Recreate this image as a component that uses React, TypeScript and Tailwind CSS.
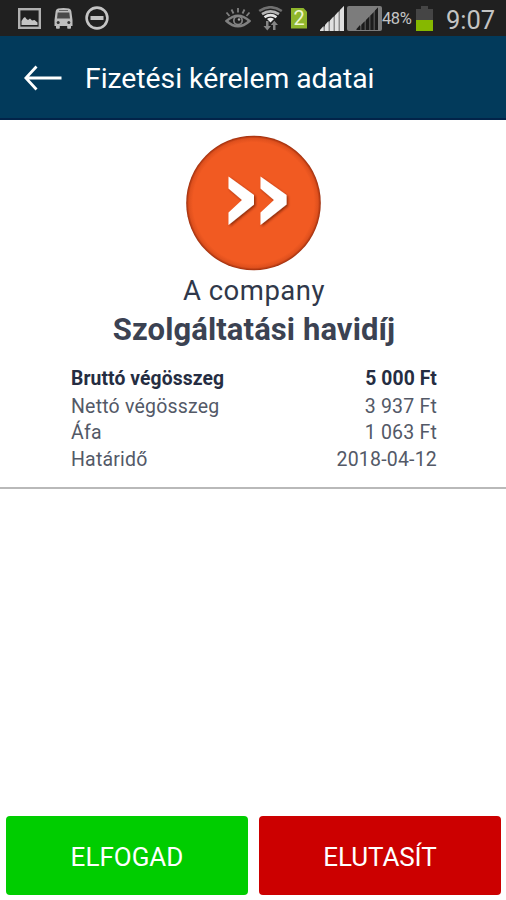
import React from 'react';

interface DetailRow {
  label: string;
  value: string;
  isTotal?: boolean;
}

const details: DetailRow[] = [
  { label: 'Bruttó végösszeg', value: '5 000 Ft', isTotal: true },
  { label: 'Nettó végösszeg', value: '3 937 Ft' },
  { label: 'Áfa', value: '1 063 Ft' },
  { label: 'Határidő', value: '2018-04-12' },
];

const StatusBar: React.FC = () => (
  <div className="flex h-9 items-center bg-[#202020] pl-[18px] pr-[11px] text-[#c4c4c4]">
    {/* notifications */}
    <svg className="h-[21px] w-[23px]" viewBox="0 0 23 21" fill="none">
      <rect x="1.2" y="1.2" width="20.6" height="18.6" stroke="#b0b0b0" strokeWidth="2.4" />
      <path d="M3.5 17v-4l2-3 1.5-1 1.5 2 1.5 1 2-1.5 2 2 2.5-.5 3 2.5V17Z" fill="#c4c4c4" />
    </svg>
    <svg className="ml-[13px] h-[21px] w-[19px]" viewBox="0 0 19 21" fill="#bdbdbd">
      <path d="M4 .5Q9.5-.5 15 .5q2 .5 2.3 2.5l1.2 9v6h-1.5v2q0 .8-.8.8h-2.2q-.8 0-.8-.8v-2H5.8v2q0 .8-.8.8H2.8q-.8 0-.8-.8v-2H.5v-6l1.200-9Q2 1 4 .5Z" />
      <rect x="5" y="2" width="9" height="1" fill="#666" />
      <path d="M3.7 4.500h11.6l.7 6H3Z" fill="#4a4a4a" />
      <circle cx="4.2" cy="14.5" r="1.5" fill="#333" />
      <circle cx="14.8" cy="14.5" r="1.5" fill="#333" />
    </svg>
    <svg className="ml-3 h-6 w-6" viewBox="0 0 24 24" fill="none" stroke="#c4c4c4">
      <circle cx="12" cy="12" r="10.4" strokeWidth="2.6" />
      <path d="M5.5 12h13" strokeWidth="4" />
    </svg>

    {/* system indicators */}
    <svg className="ml-auto h-[22px] w-[26px]" viewBox="0 0 26 22" fill="none" stroke="#808080">
      <path d="M1.5 14Q13 3.500 24.5 14Q13 24.500 1.5 14Z" strokeWidth="2.4" />
      <circle cx="13" cy="13.5" r="5" fill="#858585" stroke="none" />
      <circle cx="13" cy="13.5" r="3.3" fill="#202020" stroke="none" />
      <circle cx="14" cy="12.5" r="1.2" fill="#aaa" stroke="none" />
      <path d="M13 1v4.500M6.5 2.500l2 4M19.5 2.500l-2 4M1.5 5.500l3 3.500M24.5 5.500l-3 3.500" strokeWidth="1.8" />
    </svg>
    <svg className="ml-[7px] h-[25px] w-[25px]" viewBox="0 0 25 25" fill="none">
      <path d="M1.2 5Q12.5-2.500 23.8 5" stroke="#707070" strokeWidth="2.6" />
      <path d="M4 8.200Q12.5 2.500 21 8.200" stroke="#b5b5b5" strokeWidth="2.6" />
      <path d="M6.5 11.200Q12.5 7 18.5 11.200" stroke="#e4e4e4" strokeWidth="2.6" />
      <path d="M9 13Q12.5 10.700 16 13L12.5 16.500Z" fill="#eee" />
      <path d="M8 15h2.500v5H13l-3.700 4.500L5.500 20H8ZM15 24v-5h-2.200l3.500-4.200L20 19h-2.500v5Z" fill="#858585" />
    </svg>
    <div className="ml-[8px] flex h-[21px] w-4 items-center justify-center bg-[#8fb62c] text-[20px] leading-none text-[#edf6cf] [clip-path:polygon(0_0,75%_0,100%_20%,100%_100%,0_100%)]">
      2
    </div>
    <svg className="ml-[13px] h-[25px] w-6" viewBox="0 0 24 25">
      <path d="M0 25 24 0v25Z" fill="#8a8a8a" />
      <path d="M0 25v-1l3.500-4v5ZM5 25v-6l3.500-4v10ZM10 25V14.500l3.500-4V25ZM15 25V9.500l3.500-4V25ZM20 25V4l4-4v25Z" fill="#e0e0e0" />
    </svg>
    <svg className="ml-[3px] h-[25px] w-[35px]" viewBox="0 0 35 25">
      <rect width="35" height="25" rx="2" fill="#7c7c7c" />
      <path d="M9.5 24 31 1.500V24Z" fill="#4c4c4c" />
      <path d="M9.5 24v-1l3.500-4v5ZM14.5 24v-5.500l3-3V24ZM19 24V14l3-3v13ZM23.5 24V9.500l3-3V24ZM28 24V4.500l3-3V24Z" fill="#1c1c1c" />
    </svg>
    <span className="w-[34px] whitespace-nowrap pt-0.5 text-[16.5px] tracking-[-0.4px]">48%</span>
    <svg className="h-[25px] w-[17px]" viewBox="0 0 17 25">
      <path d="M0 3h5V0h7v3h5v22H0Z" fill="#454545" />
      <path d="M0 14h17v11H0Z" fill="#86b800" />
    </svg>
    <span className="ml-[13px] w-[49px] whitespace-nowrap pt-1 text-[25.5px] leading-8">9:07</span>
  </div>
);

const Header: React.FC = () => (
  <header className="flex h-[84px] items-center border-b-2 border-[#022349] bg-[#023a5b] pl-6 text-white">
    <svg className="mt-0.5 h-[26px] w-[38px]" viewBox="0 0 38 26" fill="none" stroke="white" strokeWidth="2.8">
      <path d="M12.5 1.500 1.8 13 12.5 24.500M2 13h35.5" />
    </svg>
    <h1 className="ml-[23px] whitespace-nowrap pt-1 text-[28.3px] leading-9">Fizetési kérelem adatai</h1>
  </header>
);

const CompanyLogo: React.FC = () => (
  <svg className="h-[136px] w-[136px]" viewBox="0 0 136 136">
    <defs>
      <radialGradient id="disc">
        <stop offset="0.9" stopColor="#f15a22" />
        <stop offset="0.96" stopColor="#df501d" />
        <stop offset="1" stopColor="#9c2d0c" />
      </radialGradient>
      <filter id="shadow" x="-20%" y="-20%" width="150%" height="150%">
        <feDropShadow dx="1.5" dy="1.5" stdDeviation="1.2" floodColor="#6b1d00" floodOpacity="0.7" />
      </filter>
    </defs>
    <circle cx="67.5" cy="68" r="67.3" fill="url(#disc)" />
    <g fill="white" filter="url(#shadow)">
      <path d="M42.5 41.500 68 60v9.500L42.5 90V77.500L56 65 42.5 53.500Z" />
      <path d="M74.5 41.500 100.5 60v9.500L74.5 90V77.500L88 65 74.5 53.500Z" />
    </g>
  </svg>
);

export default function App() {
  return (
    <div className="flex h-[900px] w-full flex-col bg-white font-[Roboto,sans-serif]">
      <StatusBar />
      <Header />

      <section className="flex h-[369px] flex-col items-center border-b-2 border-[#b9b9b9] pl-0.5 pt-[15px] text-[#30384a]">
        <CompanyLogo />
        <p className="whitespace-nowrap pt-px text-[27.5px] leading-[38px] tracking-[0.5px]">A company</p>
        <h2 className="whitespace-nowrap text-[31px] font-bold leading-10 tracking-[0.1px] text-[#3b4252]">
          Szolgáltatási havidíj
        </h2>
        <div className="mt-4 w-[366px]">
          {details.map((row) => (
            <div
              key={row.label}
              className={`flex h-[26.8px] items-center justify-between ${
                row.isTotal
                  ? 'text-[19.3px] font-bold tracking-[0.1px] text-[#252d42]'
                  : 'text-[19.5px] tracking-[0.2px] text-[#535967]'
              }`}
            >
              <span>{row.label}</span>
              <span>{row.value}</span>
            </div>
          ))}
        </div>
      </section>

      <footer className="mt-auto flex gap-[11px] pb-[5px] pl-1.5 pr-[5px]">
        <button className="h-[79px] flex-1 rounded bg-[#00cd00] pt-[3px] text-[26px] text-white">ELFOGAD</button>
        <button className="h-[79px] flex-1 rounded bg-[#cc0000] pt-[3px] text-[26px] tracking-[-0.1px] text-white">
          ELUTASÍT
        </button>
      </footer>
    </div>
  );
}
